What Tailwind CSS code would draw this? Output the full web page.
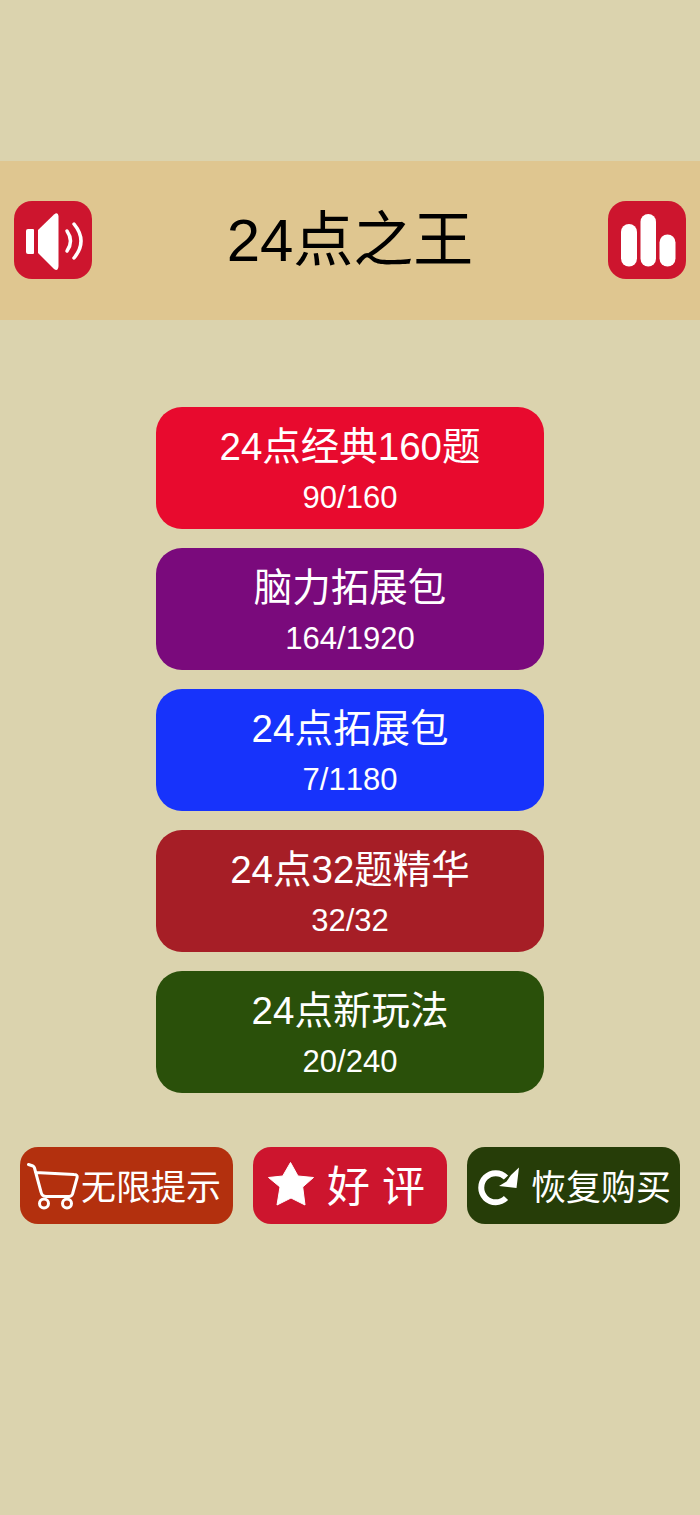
<!DOCTYPE html>
<html lang="zh">

<head>
    <meta charset="UTF-8">
    <meta name="viewport" content="width=device-width, initial-scale=1.0">
    <script src="https://cdn.jsdelivr.net/npm/@tailwindcss/browser@4"></script>
    <title>24点之王</title>
</head>

<body class="bg-[#dbd3ae] font-['Liberation_Sans','Noto_Sans_CJK_SC',sans-serif] [font-kerning:none]">
    <div class="w-[700px] h-[1515px] overflow-hidden pt-[161px]">
        <!-- header -->
        <div class="h-[159px] bg-[#dfc690] flex items-center justify-between px-[14px] pb-[1px]">
            <button class="w-[78px] h-[78px] rounded-[18px] bg-[#cd152e] flex items-center justify-center">
                <svg width="78" height="78" viewBox="0 0 78 78" fill="none">
                    <path d="M14 28L19 28Q20 28 20 29L20 52Q20 53 19 53L14 53Q12 53 12 51L12 30Q12 28 14 28Z" fill="#fff" />
                    <path d="M24 29L40 13.500Q44 10.500 44.500 15L44.500 65Q44 71 40 68L24 52Z" fill="#fff" />
                    <path d="M53 30Q60 40 53 50" stroke="#fff" stroke-width="3.500" stroke-linecap="round" />
                    <path d="M60 23Q74 40 60 57" stroke="#fff" stroke-width="3.500" stroke-linecap="round" />
                </svg>
            </button>
            <h1 class="text-[60px] leading-none text-black mt-[1px]">24点之王</h1>
            <button class="w-[78px] h-[78px] rounded-[18px] bg-[#cd152e] flex items-center justify-center">
                <svg width="78" height="78" viewBox="0 0 78 78" fill="#fff">
                    <rect x="13" y="23" width="16" height="42.500" rx="8" />
                    <rect x="32.500" y="13" width="15.500" height="52.500" rx="7.750" />
                    <rect x="51.500" y="33.500" width="16" height="32" rx="8" />
                </svg>
            </button>
        </div>

        <!-- level packs -->
        <div class="mt-[87px] flex flex-col items-center gap-[19px] text-white">
            <div class="w-[388px] h-[122px] rounded-[26px] bg-[#e80a2e] flex flex-col items-center pt-[18px]">
                <div class="text-[38.500px] leading-[44px]">24点经典160题</div>
                <div class="text-[31px] leading-[36px] mt-[11px]">90/160</div>
            </div>
            <div class="w-[388px] h-[122px] rounded-[26px] bg-[#7a0a7c] flex flex-col items-center pt-[18px]">
                <div class="text-[38.500px] leading-[44px]">脑力拓展包</div>
                <div class="text-[31px] leading-[36px] mt-[11px]">164/1920</div>
            </div>
            <div class="w-[388px] h-[122px] rounded-[26px] bg-[#1733fb] flex flex-col items-center pt-[18px]">
                <div class="text-[38.500px] leading-[44px]">24点拓展包</div>
                <div class="text-[31px] leading-[36px] mt-[11px]">7/1180</div>
            </div>
            <div class="w-[388px] h-[122px] rounded-[26px] bg-[#a61e26] flex flex-col items-center pt-[18px]">
                <div class="text-[38.500px] leading-[44px]">24点32题精华</div>
                <div class="text-[31px] leading-[36px] mt-[11px]">32/32</div>
            </div>
            <div class="w-[388px] h-[122px] rounded-[26px] bg-[#2a500a] flex flex-col items-center pt-[18px]">
                <div class="text-[38.500px] leading-[44px]">24点新玩法</div>
                <div class="text-[31px] leading-[36px] mt-[11px]">20/240</div>
            </div>
        </div>

        <!-- bottom buttons -->
        <div class="mt-[54px] px-[20px] flex justify-between text-white">
            <button class="w-[213px] h-[77px] rounded-[18px] bg-[#b3300e] flex items-center pl-[7px]">
                <svg width="54" height="50" viewBox="0 0 54 50" fill="none" stroke="#fff" stroke-width="3" class="shrink-0">
                    <path d="M1.500 3.500L6 5Q7 5.500 7.500 7L14 31Q15 35.500 19 35.500L42 35.500Q44.500 35.500 45.500 33L50 17Q51 13.500 47 13.500L8.500 11.500" stroke-linecap="round" stroke-linejoin="round" />
                    <circle cx="17" cy="42.500" r="4.500" />
                    <circle cx="40" cy="42.500" r="4.500" />
                </svg>
                <span class="text-[35px] leading-none mt-[4px]">无限提示</span>
            </button>
            <button class="w-[194px] h-[77px] rounded-[18px] bg-[#cd152e] flex items-center pl-[15px]">
                <svg width="46" height="48" viewBox="0 0 46 48" fill="#fff" stroke="#fff" stroke-width="1" stroke-linejoin="round" class="shrink-0">
                    <path d="M22.500 0.500L30 14L45.500 15.500L34.700 25L37 43L23 36L9 43L12 25L0.500 15.500L14.700 14Z" />
                </svg>
                <span class="text-[43px] leading-none mt-[4px] ml-[13px]">好 评</span>
            </button>
            <button class="w-[213px] h-[77px] rounded-[18px] bg-[#263d08] flex items-center pl-[11px]">
                <svg width="44" height="44" viewBox="0 0 44 44" fill="none" class="shrink-0">
                    <path d="M28 34A14.500 14.500 0 1 1 28 13.500" stroke="#fff" stroke-width="6" />
                    <path d="M41 3.500L38.500 24L21 22L28.500 17.500L33 11Z" fill="#fff" />
                </svg>
                <span class="text-[35px] leading-none mt-[4px] ml-[9px]">恢复购买</span>
            </button>
        </div>
    </div>
</body>

</html>
